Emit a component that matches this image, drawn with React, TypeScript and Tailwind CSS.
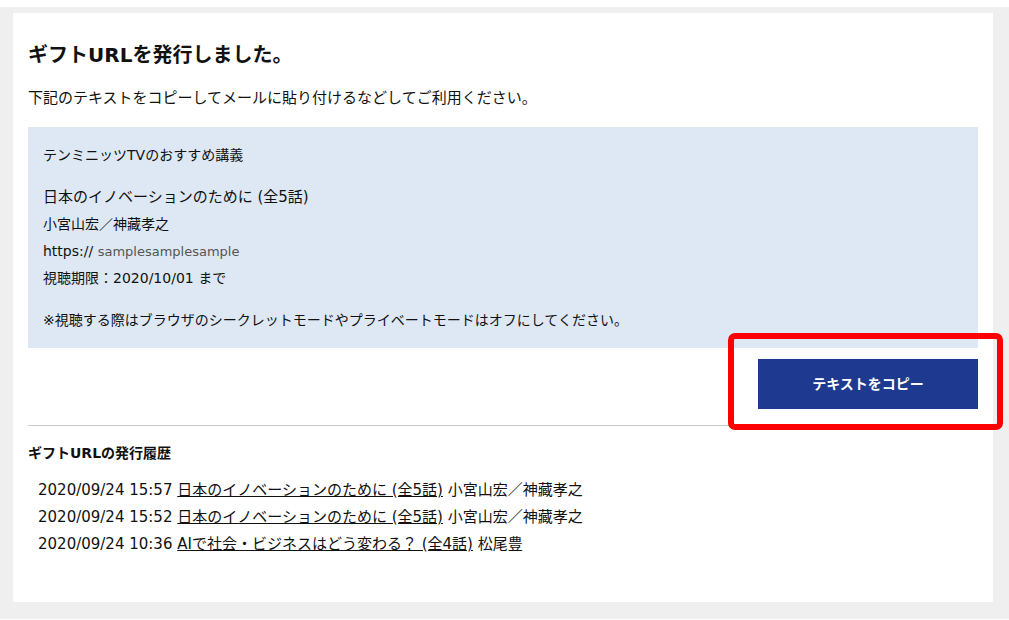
export default function App() {
  const history = [
    { at: '2020/09/24 15:57', title: '日本のイノベーションのために (全5話)', author: '小宮山宏／神藏孝之' },
    { at: '2020/09/24 15:52', title: '日本のイノベーションのために (全5話)', author: '小宮山宏／神藏孝之' },
    { at: '2020/09/24 10:36', title: 'AIで社会・ビジネスはどう変わる？ (全4話)', author: '松尾豊' },
  ];

  return (
    <div
      className="relative min-h-[620px] bg-white pt-[7px] text-[#111]"
      style={{ fontFamily: '"DejaVu Sans", "Noto Sans CJK JP", sans-serif' }}
    >
      <div className="bg-[#efefef] pl-[13px] pr-[16px] pt-[6px] pb-[17px]">
        <div className="bg-white px-[15px] pt-[28px] pb-[44px]">
          {/* Heading */}
          <h1 className="text-[20px] leading-[28px] font-bold">ギフトURLを発行しました。</h1>
          <p className="mt-[18px] text-[15px] leading-[22px]">
            下記のテキストをコピーしてメールに貼り付けるなどしてご利用ください。
          </p>

          {/* Text to copy */}
          <div className="mt-[18px] bg-[#dde8f4] px-[15px] pt-[18px] pb-[18px] text-[14px]">
            <p className="leading-[20px]">テンミニッツTVのおすすめ講義</p>
            <p className="mt-[18px] text-[15px] leading-[28px]">日本のイノベーションのために (全5話)</p>
            <p className="leading-[27px]">小宮山宏／神藏孝之</p>
            <p className="leading-[27px]">
              https:// <span className="text-[13px] text-[#555]">samplesamplesample</span>
            </p>
            <p className="leading-[27px]">視聴期限：2020/10/01 まで</p>
            <p className="mt-[18px] leading-[20px]">
              ※視聴する際はブラウザのシークレットモードやプライベートモードはオフにしてください。
            </p>
          </div>

          <div className="mt-[11px] flex justify-end">
            <button className="h-[50px] w-[220px] bg-[#1e3990] text-[14px] font-bold text-white">
              テキストをコピー
            </button>
          </div>

          <hr className="mt-[16px] border-0 border-t border-[#c8c8c8]" />

          {/* History */}
          <h2 className="mt-[17px] text-[14px] leading-[20px] font-bold">ギフトURLの発行履歴</h2>
          <ul className="mt-[14px] pl-[10px] text-[15px]">
            {history.map((h) => (
              <li key={h.at} className="leading-[27px]">
                {h.at} <a href="#" className="underline">{h.title}</a> {h.author}
              </li>
            ))}
          </ul>
        </div>
      </div>

      {/* Annotation highlight */}
      <div className="pointer-events-none absolute left-[728px] top-[333px] h-[97px] w-[275px] rounded-[7px] border-[6px] border-[#ff0000]" />
    </div>
  );
}
